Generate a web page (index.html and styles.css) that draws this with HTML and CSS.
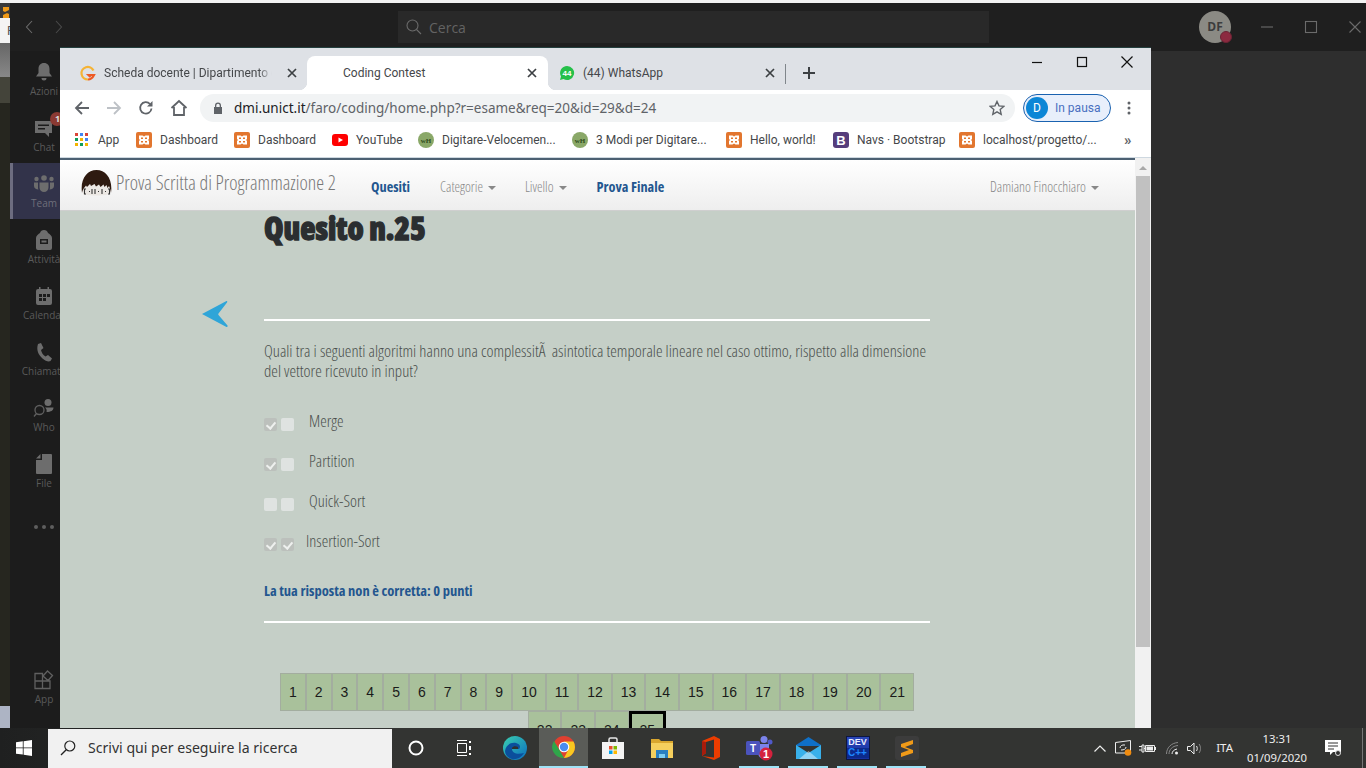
FILE: index.html
```html
<!DOCTYPE html>
<html lang="it">
<head>
<meta charset="utf-8">
<title>Coding Contest</title>
<link rel="stylesheet" href="styles.css">
</head>
<body>
<div class="top-strip"></div>
<div class="edge">
  <div class="e1"><svg width="10" height="15" viewBox="0 0 10 15"><path class="sub" d="M3 2h6v3L5 7l4 2v4H3v-3l4-2-4-2z"/></svg></div>
  <div class="e2">F</div><div class="e3"></div><div class="e4"></div><div class="e5"></div><div class="e6"></div>
</div>

<section class="teams">
  <header class="t-bar">
    <div class="t-nav">
      <svg width="10" height="14" viewBox="0 0 10 14"><path class="ln" d="M7 1 1.500 7 7 13"/></svg>
      <svg width="10" height="14" viewBox="0 0 10 14"><path class="ln dim" d="M3 1l5.500 6L3 13"/></svg>
    </div>
    <div class="t-search">
      <svg width="16" height="16" viewBox="0 0 16 16"><circle class="ln" cx="6.500" cy="6.500" r="5.500"/><path class="ln" d="M10.500 10.500 15 15"/></svg>
      <span>Cerca</span>
    </div>
    <div class="t-avatar">DF<i></i></div>
    <div class="t-ctl">
      <svg width="14" height="14" viewBox="0 0 14 14"><path class="ln" d="M1 7h12"/></svg>
      <svg width="14" height="14" viewBox="0 0 14 14"><rect class="ln" x="1.500" y="1.500" width="11" height="11"/></svg>
      <svg width="14" height="14" viewBox="0 0 14 14"><path class="ln" d="M1.500 1.500l11 11m0-11-11 11"/></svg>
    </div>
  </header>
  <div class="t-body">
    <nav class="rail">
      <div class="ri"><svg width="20" height="20" viewBox="0 0 20 20"><path class="gi" d="M10 1c3.500 0 5.500 2.500 5.500 6v4l2.500 3.500H2L4.500 11V7C4.500 3.500 6.500 1 10 1zM7.500 16h5a2.500 2.500 0 0 1-5 0z"/></svg><span>Azioni</span></div>
      <div class="ri"><svg width="20" height="20" viewBox="0 0 20 20"><path class="gi" d="M1 3h17v12h-3v4l-4-4H1zM4 6.500v1.500h11V6.500zM4 10v1.500h7V10z" fill-rule="evenodd"/></svg><span>Chat</span><b class="badge">1</b></div>
      <div class="ri on"><svg width="22" height="20" viewBox="0 0 22 20"><circle class="gi" cx="11" cy="4" r="2.800"/><circle class="gi" cx="3.500" cy="5" r="2.200"/><circle class="gi" cx="18.500" cy="5" r="2.200"/><path class="gi" d="M6.500 8.500h9v5a4.500 4.500 0 0 1-9 0zM1 8.500h4v5c0 1 .2 1.500.5 2C3 15.500 1 14 1 12zM21 8.500h-4v5c0 1-.2 1.500-.5 2 2.500 0 4.500-1.500 4.500-3.500z"/></svg><span>Team</span></div>
      <div class="ri"><svg width="18" height="20" viewBox="0 0 18 20"><path class="gi" fill-rule="evenodd" d="M9 0c2 0 3.500 1 4 3 2 1 4 3 4 5v10a2 2 0 0 1-2 2H3a2 2 0 0 1-2-2V8c0-2 2-4 4-5 .5-2 2-3 4-3zM5 9v5h8V9zM6.500 10.500h5v2h-5z"/></svg><span>Attività</span></div>
      <div class="ri"><svg width="18" height="20" viewBox="0 0 18 20"><path class="gi" fill-rule="evenodd" d="M4 1h1.500v2h7V1H14v2h1a2 2 0 0 1 2 2v12a2 2 0 0 1-2 2H3a2 2 0 0 1-2-2V5a2 2 0 0 1 2-2h1zM4 8v3h3V8zM8 8v3h3V8zM12 8v3h3V8zM4 12v3h3v-3zM8 12v3h3v-3z"/></svg><span>Calendar</span></div>
      <div class="ri"><svg width="18" height="20" viewBox="0 0 18 20"><path class="gi" d="M3 2l3-1 2.500 5L6 8c.5 2.500 2 5 4.500 6.500L13 13l4 3.500-1.500 2.500c-2 1-5 0-8-2.500C3.500 13 1 8 3 2z"/></svg><span>Chiamate</span></div>
      <div class="ri"><svg width="22" height="20" viewBox="0 0 22 20"><circle class="gi" cx="15" cy="4.500" r="3.500"/><path class="gi" d="M12 9.500h8.500c0 3-2.500 4.500-7 4.500.5-1.500 0-3.500-1.500-4.500z"/><circle class="gl" cx="6.500" cy="12" r="4.500"/><path class="gl" d="M3.500 15.500 1 18.500"/></svg><span>Who</span></div>
      <div class="ri"><svg width="18" height="20" viewBox="0 0 18 20"><path class="gi" d="M7 0h9a1 1 0 0 1 1 1v18a1 1 0 0 1-1 1H2a1 1 0 0 1-1-1V6h6zM1 4.500 5.500 0v4.500z"/></svg><span>File</span></div>
      <div class="ri dots"><i></i><i></i><i></i></div>
      <div class="rail-fill"></div>
      <div class="ri app"><svg width="20" height="20" viewBox="0 0 20 20"><path class="gl" d="M1 3.500h7.500V11H1zM1 11h7.500v7.500H1zM8.500 11H16v7.500H8.500zM13.500 1l5 4.500-4.500 5-5-4.500z"/></svg><span>App</span></div>
    </nav>
    <div class="t-main"></div>
  </div>
</section>

<section class="chrome">
  <div class="tabstrip">
    <div class="tab">
      <svg class="fav" width="16" height="16" viewBox="0 0 16 16"><path d="M13.500 5.500A6.300 6.300 0 1 0 8 14.500" fill="none" stroke="#f5b335" stroke-width="2.200"/><path d="M8 14.500c2.500 0 4.500-1.500 6-4.500H8.500l2 2" fill="none" stroke="#ee5a24" stroke-width="2.200"/></svg>
      <span class="tt fade">Scheda docente | Dipartimento di</span>
      <svg class="x" width="10" height="10" viewBox="0 0 10 10"><path d="M1 1l8 8m0-8L1 9"/></svg>
    </div>
    <div class="tab active">
      <span class="tt center">Coding Contest</span>
      <svg class="x" width="10" height="10" viewBox="0 0 10 10"><path d="M1 1l8 8m0-8L1 9"/></svg>
    </div>
    <div class="tab third">
      <svg class="fav" width="16" height="16" viewBox="0 0 16 16"><path d="M8 1a7 7 0 1 1-3.500 13L1 15l1-3.500A7 7 0 0 1 8 1z" fill="#25c04a"/><text x="8" y="10.500" class="favnum">44</text></svg>
      <span class="tt">(44) WhatsApp</span>
      <svg class="x" width="10" height="10" viewBox="0 0 10 10"><path d="M1 1l8 8m0-8L1 9"/></svg>
    </div>
    <div class="tabsep"></div>
    <svg class="plus" width="12" height="12" viewBox="0 0 12 12"><path d="M6 0v12M0 6h12"/></svg>
    <div class="wctl">
      <svg width="12" height="12" viewBox="0 0 12 12"><path d="M1 6.500h10"/></svg>
      <svg width="12" height="12" viewBox="0 0 12 12"><rect x="1.500" y="1.500" width="9" height="9"/></svg>
      <svg width="12" height="12" viewBox="0 0 12 12"><path d="M.5.500l11 11m0-11-11 11"/></svg>
    </div>
  </div>

  <div class="toolbar">
    <svg class="tb" width="16" height="16" viewBox="0 0 16 16"><path d="M15 8H2M8 2 2 8l6 6"/></svg>
    <svg class="tb off" width="16" height="16" viewBox="0 0 16 16"><path d="M1 8h13M8 2l6 6-6 6"/></svg>
    <svg class="tb" width="16" height="16" viewBox="0 0 16 16"><path d="M13.500 8.500A5.700 5.700 0 1 1 12 4"/><path class="tbf" d="M14.500 1v5.500H9z"/></svg>
    <svg class="tb" width="18" height="18" viewBox="0 0 18 18"><path d="M1.500 9 9 2l7.500 7M4 8v8h10V8"/></svg>
    <div class="omni">
      <svg width="10" height="12" viewBox="0 0 10 12"><path class="lock" fill-rule="evenodd" d="M2 5V3.500a3 3 0 0 1 6 0V5h1v7H1V5zM3.300 5h3.400V3.500a1.700 1.700 0 0 0-3.400 0z"/></svg>
      <span class="url"><b>dmi.unict.it</b>/faro/coding/home.php?r=esame&amp;req=20&amp;id=29&amp;d=24</span>
      <svg class="star" width="16" height="16" viewBox="0 0 16 16"><path d="M8 1.500l2 4.400 4.800.500-3.600 3.200 1 4.700L8 11.900l-4.200 2.400 1-4.700L1.200 6.400 6 5.900z"/></svg>
    </div>
    <div class="pill"><span class="pav">D</span><span>In pausa</span></div>
    <svg class="menu" width="4" height="14" viewBox="0 0 4 14"><circle cx="2" cy="2" r="1.500"/><circle cx="2" cy="7" r="1.500"/><circle cx="2" cy="12" r="1.500"/></svg>
  </div>

  <div class="bookmarks">
    <div class="bm apps"><svg width="13" height="13" viewBox="0 0 13 13"><path fill="#db4437" d="M0 0h3v3H0z"/><path fill="#4285f4" d="M5 0h3v3H5z"/><path fill="#db4437" d="M10 0h3v3h-3z"/><path fill="#0f9d58" d="M0 5h3v3H0z"/><path fill="#f4b400" d="M5 5h3v3H5z"/><path fill="#4285f4" d="M10 5h3v3h-3z"/><path fill="#f4b400" d="M0 10h3v3H0z"/><path fill="#0f9d58" d="M5 10h3v3H5z"/><path fill="#f4b400" d="M10 10h3v3h-3z"/></svg><span>App</span></div>
    <div class="bm w58"><svg class="ico" viewBox="0 0 16 16"><rect width="16" height="16" rx="2" fill="#e2762f"/><path class="xm" fill-rule="evenodd" d="M3 3.500h3.500L8 4.500l1.500-1H13v3.500l-1 1 1 1v3.500H9.500l-1.500-1-1.500 1H3V9l1-1-1-1zM5 5.500v1.500h2V5.500zM9 5.500v1.500h2V5.500zM5 9v1.500h2V9zM9 9v1.500h2V9z"/></svg><span>Dashboard</span></div>
    <div class="bm w58"><svg class="ico" viewBox="0 0 16 16"><rect width="16" height="16" rx="2" fill="#e2762f"/><path class="xm" fill-rule="evenodd" d="M3 3.500h3.500L8 4.500l1.500-1H13v3.500l-1 1 1 1v3.500H9.500l-1.500-1-1.500 1H3V9l1-1-1-1zM5 5.500v1.500h2V5.500zM9 5.500v1.500h2V5.500zM5 9v1.500h2V9zM9 9v1.500h2V9z"/></svg><span>Dashboard</span></div>
    <div class="bm w46"><svg class="ico" viewBox="0 0 16 16"><rect y="2" width="16" height="12" rx="3" fill="#f00"/><path d="M6.500 5.500 11 8l-4.500 2.500z" fill="#fff"/></svg><span>YouTube</span></div>
    <div class="bm w114"><svg class="ico" viewBox="0 0 16 16"><circle cx="8" cy="8" r="8" fill="#8aa868"/><text x="8" y="10.500" class="wh">wH</text></svg><span>Digitare-Velocemen...</span></div>
    <div class="bm w114"><svg class="ico" viewBox="0 0 16 16"><circle cx="8" cy="8" r="8" fill="#8aa868"/><text x="8" y="10.500" class="wh">wH</text></svg><span>3 Modi per Digitare...</span></div>
    <div class="bm w67"><svg class="ico" viewBox="0 0 16 16"><rect width="16" height="16" rx="2" fill="#e2762f"/><path class="xm" fill-rule="evenodd" d="M3 3.500h3.500L8 4.500l1.500-1H13v3.500l-1 1 1 1v3.500H9.500l-1.500-1-1.500 1H3V9l1-1-1-1zM5 5.500v1.500h2V5.500zM9 5.500v1.500h2V5.500zM5 9v1.500h2V9zM9 9v1.500h2V9z"/></svg><span>Hello, world!</span></div>
    <div class="bm w86"><svg class="ico" viewBox="0 0 16 16"><rect width="16" height="16" rx="3" fill="#563d7c"/><text x="8" y="12.500" class="bs">B</text></svg><span>Navs · Bootstrap</span></div>
    <div class="bm w112"><svg class="ico" viewBox="0 0 16 16"><rect width="16" height="16" rx="2" fill="#e2762f"/><path class="xm" fill-rule="evenodd" d="M3 3.500h3.500L8 4.500l1.500-1H13v3.500l-1 1 1 1v3.500H9.500l-1.500-1-1.500 1H3V9l1-1-1-1zM5 5.500v1.500h2V5.500zM9 5.500v1.500h2V5.500zM5 9v1.500h2V9zM9 9v1.500h2V9z"/></svg><span>localhost/progetto/...</span></div>
    <span class="more">»</span>
  </div>

  <div class="viewport">
    <div class="page">
      <div class="navbar">
        <div class="brand">
          <svg width="31" height="27" viewBox="0 0 31 27"><path fill="#ece8e4" d="M2 16h27v9c-8 2-19 2-27 0z"/><path fill="#2e1a10" d="M1 24C-1 10 6 1 15.500 1S32 10 30 24c-.5-3-1-5-2-7l-1.500 2-1-3-2 2-1-2.500-3 2.500-1.500-2.500-3 2-1.500-2.500L10 17l-1-2-3 3-1-1.500L3 19c-1 1.500-1.500 3-2 5z"/><path fill="none" stroke="#333" stroke-width="1.100" d="M5 20H3.500v5H5M8 22.500h1M11 20v5M14 20v5M17 22.500h1M21 20v5M24 22.500h1M27 20h1.500v5H27"/></svg>
          <span>Prova Scritta di Programmazione 2</span>
        </div>
        <a class="nl strong first">Quesiti</a>
        <a class="nl drop">Categorie</a>
        <a class="nl drop last">Livello</a>
        <a class="nl strong">Prova Finale</a>
        <a class="nl drop user">Damiano Finocchiaro</a>
      </div>
      <main class="body-row">
        <svg class="back" width="26" height="26" viewBox="0 0 26 26"><path fill="#2fa5d8" d="M0 13 24.500 0c.8 0 1 .7.500 1.500L16.500 12.500c-.4.500-.4 1 0 1.500L25.500 24.500c.3.800 0 1.500-1 1.500z"/></svg>
        <div class="question">
          <h1>Quesito n.25</h1>
          <hr class="r1">
          <p class="qt">Quali tra i seguenti algoritmi hanno una complessitÃ&nbsp; asintotica temporale lineare nel caso ottimo, rispetto alla dimensione del vettore ricevuto in input?</p>
          <ul class="opts">
            <li><i class="cb ck"></i><i class="cb"></i><span>Merge</span></li>
            <li><i class="cb ck"></i><i class="cb"></i><span>Partition</span></li>
            <li><i class="cb"></i><i class="cb"></i><span>Quick-Sort</span></li>
            <li class="tight"><i class="cb ck"></i><i class="cb ck"></i><span>Insertion-Sort</span></li>
          </ul>
          <p class="verdict">La tua risposta non è corretta: 0 punti</p>
          <hr class="r2">
          <div class="pager">
            <a>1</a><a>2</a><a>3</a><a>4</a><a>5</a><a>6</a><a>7</a><a>8</a><a>9</a><a>10</a><a>11</a><a>12</a><a>13</a><a>14</a><a>15</a><a>16</a><a>17</a><a>18</a><a>19</a><a>20</a><a>21</a><a>22</a><a>23</a><a>24</a><a class="cur">25</a>
          </div>
        </div>
      </main>
    </div>
    <div class="scroll"><div class="up"></div><div class="thumb"></div></div>
  </div>
</section>

<footer class="taskbar">
  <svg class="win" width="16" height="16" viewBox="0 0 16 16"><path fill="#fff" d="M0 2.300 6.800 1.300v6.200H0zM7.600 1.200 16 0v7.500H7.600zM0 8.300h6.800v6.300L0 13.700zM7.600 8.300H16V16l-8.400-1.200z"/></svg>
  <div class="ts">
    <svg width="16" height="16" viewBox="0 0 16 16"><circle cx="9.800" cy="6" r="5" fill="none" stroke="#222" stroke-width="1.200"/><path d="M6.200 9.700 1 15" stroke="#222" stroke-width="1.300"/></svg>
    <span>Scrivi qui per eseguire la ricerca</span>
  </div>
  <div class="tk cortana"><svg width="16" height="16" viewBox="0 0 16 16"><circle cx="8" cy="8" r="6.500" fill="none" stroke="#fff" stroke-width="2"/></svg></div>
  <div class="tk view"><svg width="16" height="16" viewBox="0 0 16 16"><path fill="none" stroke="#fff" d="M1 .5h10M1 15.500h10M1.500 3.500h9v9h-9z"/><path stroke="#fff" stroke-width="2" d="M14 1v2M14 6v4M14 13v2"/></svg></div>
  <div class="tk"><svg width="26" height="26" viewBox="0 0 26 26"><defs><linearGradient id="eg" x1="0" y1="0" x2="1" y2="1"><stop offset="0" stop-color="#3bd0b0"/><stop offset="1" stop-color="#0a6cc0"/></linearGradient></defs><circle cx="13" cy="13" r="12" fill="url(#eg)"/><path fill="#0b4f9c" d="M3 16c1-6 6-9 11-8 4 1 5 4 3 6H10c0 4 5 6 12 4-3 5-8 7-12 6-4-1-7-4-7-8z"/><path fill="#2f3130" d="M10 13c1-2 4-2 6-1v2h-6z"/></svg></div>
  <div class="tk active"><svg width="24" height="24" viewBox="0 0 24 24"><circle cx="12" cy="12" r="11" fill="#e04030"/><path fill="#2fa64a" d="M12 23A11 11 0 0 1 2 6l5.500 9 4.500 8z"/><path fill="#f8c820" d="M12 23a11 11 0 0 0 9.500-16.500H12l4.500 8z"/><circle cx="12" cy="12" r="5.300" fill="#fff"/><circle cx="12" cy="12" r="4.200" fill="#4a8cf0"/></svg></div>
  <div class="tk"><svg width="24" height="24" viewBox="0 0 24 24"><path fill="none" stroke="#e8e8e8" stroke-width="1.500" d="M8 6V3.500a1.500 1.500 0 0 1 1.500-1.500h5A1.500 1.500 0 0 1 16 3.500V6"/><path fill="#f4f4f4" d="M1 6h22v17H1z"/><path fill="#e94f2f" d="M8 10h3.500v3.500H8z"/><path fill="#7fba00" d="M12.500 10H16v3.500h-3.500z"/><path fill="#00a4ef" d="M8 14.500h3.500V18H8z"/><path fill="#ffb900" d="M12.500 14.500H16V18h-3.500z"/></svg></div>
  <div class="tk"><svg width="22" height="20" viewBox="0 0 22 20"><path fill="#d9a62e" d="M0 1h8l2 2h12v3H0z"/><path fill="#f5cf5d" d="M0 5h22v15H0z"/><path fill="#2a7fc0" d="M5 12h12v8h-3v-4H8v4H5z"/><path fill="#7fcdf0" d="M8 16h6v4H8z"/></svg></div>
  <div class="tk"><svg width="20" height="24" viewBox="0 0 20 24"><path fill="#eb3c00" d="M1 5 13 0l6 3v18l-6 3-12-4 12 1.500V3.500L5 6v11l-4 3z"/><path fill="#a81c0c" d="M1 5l4 1v11l-4 3z"/></svg></div>
  <div class="tk run"><svg width="28" height="26" viewBox="0 0 28 26"><circle cx="18" cy="4.500" r="3.500" fill="#7b83eb"/><circle cx="24" cy="7" r="2.500" fill="#5059c9"/><path fill="#7b83eb" d="M12 9h11v9a5.500 5.500 0 0 1-11 0z"/><rect y="6" width="14" height="14" rx="1.500" fill="#4b53bc"/><text x="7" y="17" class="tt-t">T</text><circle cx="20" cy="19" r="6.500" fill="#d4213d"/><text x="20" y="23" class="tt-b">1</text></svg></div>
  <div class="tk run"><svg width="25" height="22" viewBox="0 0 25 22"><path fill="#0f70c8" d="M0 8 12.500 0 25 8v1H0z"/><path fill="#39b0ea" d="M0 8l12.500 8L25 8v14H0z"/><path fill="#e6f6ff" d="M3 22 12.500 14 22 22z" opacity=".5"/></svg></div>
  <div class="tk run"><div class="dev"><b>DEV</b><em>C++</em></div></div>
  <div class="tk run"><div class="subl"><svg width="14" height="18" viewBox="0 0 14 18"><path class="sub" d="M1 5 13 1v4L5 8l8 3v3L1 18v-4l8-3-8-3z"/></svg></div></div>
  <div class="tray">
    <svg width="12" height="7" viewBox="0 0 12 7"><path fill="none" stroke="#eee" stroke-width="1.200" d="M.5 6.500 6 1l5.500 5.500"/></svg>
    <svg class="tr-box" width="17" height="16" viewBox="0 0 17 16"><path fill="none" stroke="#eee" d="M.5 2.500 15.500.5v12.500H.5z"/><path fill="none" stroke="#eee" d="M5 8c0-2 2-3.500 5-3M11 7c0 2-2 3-5 3"/><circle cx="13" cy="12.500" r="3.300" fill="#f08c10"/></svg>
    <svg class="tr-bat" width="17" height="11" viewBox="0 0 17 11"><path fill="none" stroke="#eee" d="M0 3.500h3M0 7h3M3 2h2v7H3zM5 5.500h1M6.500 2.500h9v6h-9z"/><path fill="#eee" d="M7.500 3.500H14v4H7.500z"/><path fill="#eee" d="M16 4h1v3h-1z"/></svg>
    <svg class="tr-wifi" width="13" height="13" viewBox="0 0 13 13"><path fill="none" stroke="#888" d="M.5 12C.5 6 5 1 12 .5M3 12c0-4 3-8 9-8.500"/><path fill="none" stroke="#eee" d="M6 12c0-2.500 2-4.500 5-5"/><circle cx="10.500" cy="11" r="1.500" fill="#eee"/></svg>
    <svg class="tr-vol" width="16" height="13" viewBox="0 0 16 13"><path fill="none" stroke="#eee" d="M.5 4.500h3L7 1v11L3.500 8.500h-3zM9.500 4c1 1.500 1 3.500 0 5"/><path fill="none" stroke="#888" d="M12 2c2 2.500 2 6.500 0 9"/></svg>
    <span class="lang">ITA</span>
    <div class="clock"><span>13:31</span><span>01/09/2020</span></div>
    <svg class="note" width="16" height="16" viewBox="0 0 16 16"><path fill="#fff" d="M0 0h16v12H8l-3 3v-3H0z"/><path stroke="#333" d="M3 3h10M3 6h10M3 9h6"/><circle cx="13" cy="13" r="2.500" fill="#2f2f2f" stroke="#ddd"/></svg>
    <i class="peek"></i>
  </div>
</footer>
</body>
</html>
```
FILE: styles.css
```css
* { box-sizing: border-box; }
html, body { margin: 0; padding: 0; }
body { width: 1366px; height: 768px; overflow: hidden; position: relative; background: #2e2e2e; font-family: "Open Sans", "Noto Sans", sans-serif; }

.top-strip { position: absolute; left: 0; top: 0; width: 1366px; height: 3px; background: #f2f2f2; }

.edge { position: absolute; left: 0; top: 3px; width: 10px; height: 725px; display: flex; flex-direction: column; overflow: hidden; }
.e1 { height: 15px; background: #3a3a3a; }
.e2 { height: 25px; background: #f4f4f4; color: #555; font: 13px/25px "Liberation Sans", sans-serif; padding-left: 7px; }
.e3 { height: 34px; background: linear-gradient(#666, #888); }
.e4 { height: 26px; background: #44443a; }
.e5 { flex: 1; background: #26261f; }
.e6 { height: 22px; background: #adb4c4; }
.sub { fill: #f09a18; }

.teams { position: absolute; left: 10px; top: 3px; width: 1356px; height: 725px; display: flex; flex-direction: column; }
.t-bar { height: 48px; background: #1f1f1f; display: flex; align-items: center; flex: none; }
.ln { fill: none; stroke: #6b6b6b; stroke-width: 1.100; }
.ln.dim { stroke: #4a4a4a; }
.t-nav { display: flex; gap: 18px; padding-left: 15px; width: 388px; }
.t-search { width: 591px; height: 32px; background: #292929; display: flex; align-items: center; gap: 7px; padding-left: 8px; color: #636363; font-size: 14px; }
.t-avatar { margin-left: 210px; width: 32px; height: 32px; border-radius: 50%; background: #8b8a84; color: #3c3c3c; font: bold 12px/32px "Open Sans", sans-serif; text-align: center; position: relative; }
.t-avatar i { position: absolute; left: 21px; top: 20px; width: 12px; height: 12px; border-radius: 50%; background: #8c2a40; border: 1px solid #6a2434; }
.t-ctl { display: flex; gap: 30px; margin-left: 29px; }

.t-body { flex: 1; display: flex; min-height: 0; }
.rail { width: 68px; flex: none; background: #1c1c1c; display: flex; flex-direction: column; overflow: hidden; }
.ri { height: 56px; flex: none; display: flex; flex-direction: column; align-items: center; padding-top: 11px; position: relative; white-space: nowrap; }
.ri span { font-size: 10px; line-height: 13px; color: #5a5a5a; margin-top: 3px; }
.ri.on { background: #32334a; border-left: 3px solid #6d6d80; padding-right: 3px; }
.ri.on span { color: #6f6f7a; }
.gi { fill: #6d6d6d; }
.gl { fill: none; stroke: #606060; stroke-width: 1.300; }
.badge { position: absolute; left: 40px; top: 5px; width: 14px; height: 14px; border-radius: 50%; background: #8b3a33; color: #ddd; font: bold 9px/14px "Open Sans", sans-serif; text-align: left; padding-left: 5px; }
.ri.dots { flex-direction: row; justify-content: center; align-items: flex-start; gap: 4px; height: 48px; padding-top: 26px; }
.ri.dots i { width: 4px; height: 4px; border-radius: 50%; background: #5e5e5e; }
.rail-fill { flex: 1; }
.ri.app { height: 58px; padding-top: 0; }
.t-main { flex: 1; background: #2e2e2e; }

.chrome { position: absolute; left: 60px; top: 47px; width: 1091px; height: 681px; background: #fff; border-top: 1px solid #24403f; display: flex; flex-direction: column; overflow: hidden; }

.tabstrip { height: 42px; flex: none; background: #dee1e6; display: flex; padding-left: 8px; position: relative; }
.tab { width: 239px; height: 34px; margin-top: 8px; display: flex; align-items: center; padding: 0 10px 0 12px; position: relative; font: 12px/16px Roboto, sans-serif; color: #45474a; }
.tab .fav { margin-right: 8px; flex: none; }
.tt { flex: 1; white-space: nowrap; overflow: hidden; }
.tt.fade { -webkit-mask-image: linear-gradient(90deg, #000 92%, transparent); mask-image: linear-gradient(90deg, #000 92%, transparent); }
.tt.center { padding-left: 24px; }
.x { flex: none; margin-left: 15px; }
.x path { stroke: #3c4043; stroke-width: 1.700; fill: none; }
.tab.active { width: 241px; background: #fff; border-radius: 8px 8px 0 0; padding-right: 11px; }
.tab.active::before, .tab.active::after { content: ""; position: absolute; bottom: 0; width: 8px; height: 8px; }
.tab.active::before { left: -8px; background: radial-gradient(circle at 0 0, transparent 8px, #fff 8.500px); }
.tab.active::after { right: -8px; background: radial-gradient(circle at 100% 0, transparent 8px, #fff 8.500px); }
.tab.third { width: 237px; padding-left: 11px; }
.favnum { font: bold 8px "Liberation Sans", sans-serif; fill: #fff; text-anchor: middle; }
.tabsep { width: 1px; height: 20px; background: #80868b; margin-top: 16px; }
.plus { margin: 19px 0 0 17px; }
.plus path { stroke: #3c4043; stroke-width: 2; fill: none; }
.wctl { position: absolute; left: 971px; top: 8px; display: flex; gap: 33px; }
.wctl svg { fill: none; stroke: #111; stroke-width: 1.200; overflow: visible; }

.toolbar { height: 32px; flex: none; background: #fff; display: flex; align-items: flex-end; padding-left: 14px; }
.tb { margin: 0 16px 6px 0; fill: none; stroke: #5f6368; stroke-width: 1.800; flex: none; }
.tb.off { stroke: #bdc1c6; }
.tbf { fill: #5f6368; stroke: none; }
.tb + .tb + .tb + .tb { margin-right: 12px; margin-bottom: 5px; }
.omni { width: 815px; height: 28px; border-radius: 14px; background: #f1f3f4; display: flex; align-items: center; padding: 0 10px 0 13px; flex: none; }
.lock { fill: #5f6368; }
.url { margin-left: 11px; flex: 1; font: 13.500px/18px "Noto Sans", sans-serif; color: #5f6368; white-space: nowrap; }
.url b { font-weight: 400; color: #202124; }
.star { fill: none; stroke: #5f6368; stroke-width: 1.400; }
.pill { margin-left: 8px; width: 88px; height: 28px; border: 1px solid #1a62b0; border-radius: 14px; background: #e8effb; display: flex; align-items: center; gap: 7px; padding-left: 2px; font: 12px/16px Roboto, sans-serif; color: #4a6fc0; flex: none; }
.pav { width: 22px; height: 22px; border-radius: 50%; background: #0c86d6; color: #fff; text-align: center; line-height: 22px; }
.menu { margin: 0 0 7px 16px; fill: #5f6368; }

.bookmarks { height: 36px; flex: none; background: #fff; display: flex; align-items: center; padding-left: 15px; font: 12px/16px Roboto, sans-serif; color: #45474a; border-bottom: 1px solid #ced8e0; }
.bm { display: flex; align-items: center; gap: 8px; white-space: nowrap; margin-right: 16px; }
.bm span { display: block; }
.apps { gap: 10px; }
.apps span { width: 22px; }
.ico { width: 16px; height: 16px; flex: none; }
.w58 span { width: 58px; } .w46 span { width: 46px; } .w114 span { width: 114px; } .w112 span { width: 112px; } .w67 span { width: 67px; } .w86 span { width: 86px; }
.xm { fill: #fff; }
.wh { font: bold 7px "Liberation Serif", serif; fill: #2e4a1c; text-anchor: middle; }
.bs { font: bold 13px "Liberation Sans", sans-serif; fill: #fff; text-anchor: middle; }
.more { margin-left: 13px; font-size: 15px; color: #5f6368; font-weight: 700; }

.viewport { flex: 1; min-height: 0; display: flex; }
.page { width: 1075px; flex: none; background: #c5cfc7; overflow: hidden; border-top: 2px solid #4c6072; }
.navbar { height: 51px; display: flex; align-items: center; background: linear-gradient(#fff, #eeeeee); border-bottom: 1px solid #cfcfcf; font-size: 14px; font-stretch: 75%; }
.brand { display: flex; align-items: center; gap: 4px; margin-left: 21px; width: 290px; color: #777; font-size: 19.800px; font-weight: 300; font-stretch: 75%; white-space: nowrap; margin-top: -5px; }
.nl { margin-top: 3px; color: #888; font-weight: 300; white-space: nowrap; margin-right: 29px; }
.nl.first, .nl.last { margin-right: 30px; }
.nl.strong { color: #23568f; font-weight: 700; font-size: 14.300px; }
.nl.drop::after { content: ""; display: inline-block; margin-left: 5px; vertical-align: 2px; border: 4px solid transparent; border-top-color: #888; border-bottom: 0; }
.nl.user { margin-left: auto; margin-right: 36px; }

.body-row { display: flex; padding-left: 142px; align-items: flex-start; }
.back { margin: 90px 36px 0 0; flex: none; }
.question { width: 666px; color: #555; font-stretch: 75%; }
h1 { margin: 0; height: 36px; font-size: 31.500px; line-height: 34px; font-weight: 800; font-stretch: 75%; color: #2b2e30; -webkit-text-stroke: 1.300px #2b2e30; }
hr { border: 0; height: 2px; background: #fff; margin: 0; }
.r1 { margin-top: 72px; }
.qt { margin: 20px 0 0; font-size: 16.700px; line-height: 20px; font-weight: 300; color: #4b4f4d; }
.opts { list-style: none; margin: 21px 0 0; padding: 0; }
.opts li { height: 40px; display: flex; align-items: center; padding-top: 4px; }
.opts span { margin-left: 11px; margin-top: -7px; font-size: 16.500px; font-weight: 300; color: #4b4f4d; }
.opts .tight span { margin-left: 8px; }
.cb { width: 13px; height: 13px; border-radius: 2px; background: #dfe3e1; margin-right: 4px; position: relative; flex: none; }
.cb.ck { background: #bcc0bc; }
.cb.ck::after { content: ""; position: absolute; left: 4px; top: 2px; width: 4px; height: 7px; border: solid #eef0ee; border-width: 0 2px 2px 0; transform: rotate(40deg); }
.verdict { margin: 19px 0 0; font-size: 14.500px; line-height: 20px; font-weight: 700; color: #23568f; }
.r2 { margin-top: 20px; }
.pager { margin-top: 50px; display: flex; flex-wrap: wrap; justify-content: center; font: 14px/20px "Liberation Sans", sans-serif; color: #1a1a1a; }
.pager a { padding: 8px; border: 1px solid #a3ad9f; background: #a9c19b; height: 38px; }
.pager a.cur { border: 3px solid #000; padding: 6px 8px; }

.scroll { width: 16px; flex: none; background: #f1f1f1; display: flex; flex-direction: column; align-items: center; padding-top: 8px; }
.up { border: 4px solid transparent; border-bottom: 4px solid #a8a8a8; border-top: 0; width: 0; }
.thumb { width: 14px; height: 471px; margin-top: 6px; background: #c1c1c1; }

.taskbar { position: absolute; left: 0; bottom: 0; width: 1366px; height: 40px; background: #2f2f2f; display: flex; align-items: center; padding-left: 16px; background-image: linear-gradient(90deg, #1f2020, #333432 400px); }
.ts { margin-left: 16px; width: 344px; height: 39px; background: #f1f1f1; display: flex; align-items: center; padding-left: 12px; gap: 12px; font: 14.100px/18px "Noto Sans", sans-serif; color: #333; white-space: nowrap; flex: none; }
.tk { width: 49px; height: 40px; flex: none; display: flex; align-items: center; justify-content: center; position: relative; }
.cortana svg { margin-right: 2px; }
.view svg { margin-right: 4px; }
.tk.active { background: #5a5c58; border-bottom: 2px solid #9fe3f7; }
.tk.run::after { content: ""; position: absolute; left: 4px; bottom: 0; width: 40px; height: 2px; background: #9fe3f7; }
.dev { width: 24px; height: 24px; background: linear-gradient(#2a46b8, #1630a0); border: 1px solid #0d1640; font: bold 9px/11px "Liberation Sans", sans-serif; text-align: center; }
.dev b { display: block; color: #e8ecff; }
.dev em { display: block; font-style: normal; color: #1e88ff; font-size: 10px; line-height: 10px; background: #0c2a8c; }
.subl { width: 24px; height: 24px; background: #3c3c3c; border-radius: 3px; display: flex; align-items: center; justify-content: center; }
.tt-t { font: bold 10px "Liberation Sans", sans-serif; fill: #fff; text-anchor: middle; }
.tt-b { font: bold 11px "Liberation Sans", sans-serif; fill: #fff; text-anchor: middle; }
.tray { margin-left: auto; display: flex; align-items: center; height: 40px; position: relative; color: #eee; }
.tr-box { margin-left: 9px; } .tr-bat { margin-left: 7px; } .tr-wifi { margin-left: 10px; } .tr-vol { margin-left: 8px; }
.lang { margin-left: 13px; font: 11.500px/16px "Noto Sans", sans-serif; }
.clock { margin-left: 9px; width: 70px; display: flex; flex-direction: column; align-items: center; font: 11.300px/19px "Noto Sans", sans-serif; }
.note { margin-left: 13px; }
.peek { margin: 0 3px 0 21px; width: 1px; height: 40px; background: #777; }
```
